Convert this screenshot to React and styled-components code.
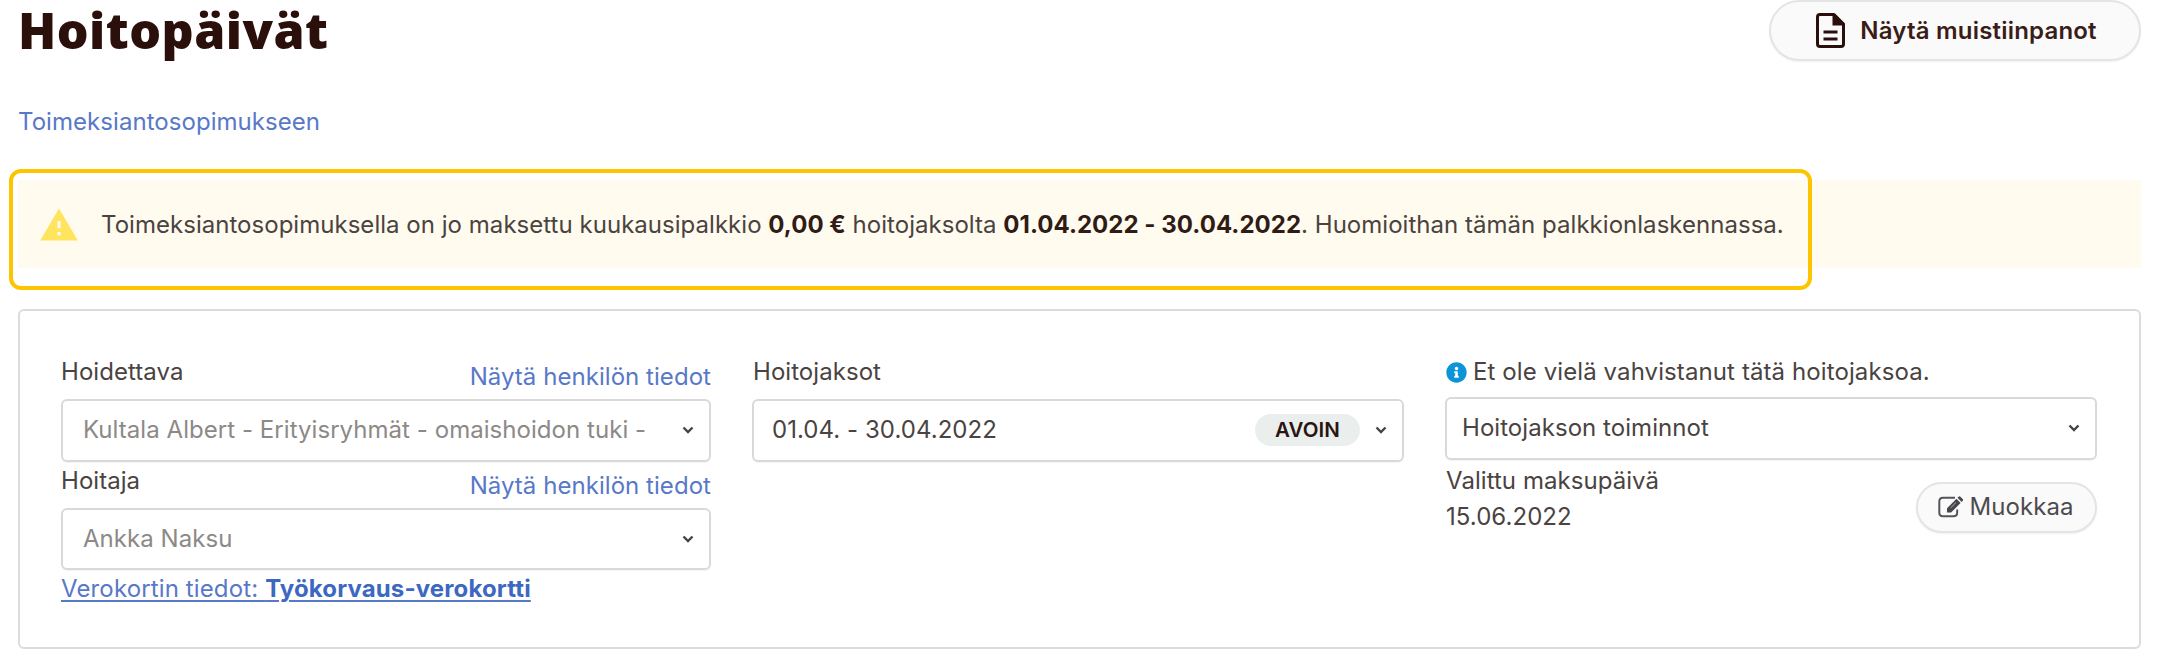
import React from 'react';
import styled, { createGlobalStyle } from 'styled-components';
import { FaInfoCircle } from 'react-icons/fa';

const GlobalStyle = createGlobalStyle`
  *, *::before, *::after { box-sizing: border-box; }
  body {
    margin: 0;
    background: #fff;
    color: #4a4341;
    font-family: Inter, "Liberation Sans", sans-serif;
    font-size: 24px;
    line-height: 36px;
    letter-spacing: 0.05px;
  }
`;

const Page = styled.main`
  display: flex;
  flex-direction: column;
  padding: 0 16px 0 18px;
  height: 666px;
`;

const Header = styled.header`
  display: flex;
  justify-content: space-between;
  align-items: flex-start;
  height: 104px;
`;

const Title = styled.h1`
  margin: 0;
  font-family: "Open Sans", sans-serif;
  font-size: 50px;
  font-weight: 800;
  line-height: 60px;
  letter-spacing: 0.45px;
  color: #2b0f0a;
`;

const PillButton = styled.button`
  display: flex;
  align-items: center;
  justify-content: center;
  gap: ${(p) => (p.$large ? '15px' : '6px')};
  width: ${(p) => (p.$large ? '372px' : '181px')};
  height: ${(p) => (p.$large ? '61px' : '51px')};
  padding: ${(p) => (p.$large ? '0 0 0 3px' : '0 2px 0 0')};
  border: 2px solid #e4e4e4;
  border-radius: 31px;
  background: #fafafa;
  box-shadow: 0 1px 2px rgba(0, 0, 0, 0.06);
  color: ${(p) => (p.$large ? '#3a1d19' : '#4d4b4e')};
  font: inherit;
  font-weight: ${(p) => (p.$large ? 600 : 400)};
  letter-spacing: ${(p) => (p.$large ? '0.2px' : 'inherit')};
`;

const Link = styled.a`
  color: #5878c8;
  text-decoration: ${(p) => (p.$underlined ? 'underline' : 'none')};
  text-decoration-thickness: 2px;
  text-underline-offset: 3px;
  letter-spacing: ${(p) => (p.$underlined ? '0.13px' : 'inherit')};
  padding-top: ${(p) => (p.$underlined ? '1px' : '0')};

  strong { color: #3d68c2; }
`;

const Alert = styled.section`
  position: relative;
  display: flex;
  align-items: center;
  gap: 23px;
  height: 88px;
  margin-top: 40px;
  padding-left: 22px;
  background: #fffbee;

  strong { color: #301b17; font-weight: 700; }
`;

const AlertText = styled.span`
  padding-top: 2px;
  letter-spacing: 0.03px;
`;

const Highlight = styled.div`
  position: absolute;
  top: -11px;
  left: -9px;
  width: 1803px;
  height: 121px;
  border: 4px solid #ffc400;
  border-radius: 12px;
  pointer-events: none;
`;

const Panel = styled.section`
  display: grid;
  grid-template-columns: 650px 652px 652px;
  column-gap: 41px;
  align-items: start;
  height: 340px;
  margin-top: 41px;
  padding: 42px 0 0 41px;
  border: 2px solid #dcdcdc;
  border-radius: 6px;
`;

const Column = styled.div`
  display: flex;
  flex-direction: column;
  min-width: 0;
`;

const LabelRow = styled.div`
  display: flex;
  justify-content: space-between;
  align-items: flex-start;
  height: ${(p) => p.$height || 46}px;
  padding: 1px 0 0 ${(p) => p.$indent || 0}px;

  ${Link} { margin-top: 5px; }
`;

const Notice = styled.span`
  display: flex;
  align-items: center;
  gap: 6px;
  padding-left: 1px;
  letter-spacing: 0.1px;

  svg { color: #0c94d8; }
`;

const SelectBox = styled.div`
  display: flex;
  align-items: center;
  height: 62.5px;
  padding: 0 15px 0 ${(p) => p.$inset || 20}px;
  border: 2px solid #d9d9d9;
  border-radius: 6px;
  box-shadow: 0 1px 1px rgba(0, 0, 0, 0.05);
  color: ${(p) => (p.$muted ? '#8c8987' : '#4a4341')};
`;

const Value = styled.span`
  flex: 1;
  white-space: nowrap;
`;

const Badge = styled.span`
  display: flex;
  align-items: center;
  justify-content: center;
  width: 105px;
  height: 32px;
  margin-right: 15px;
  border-radius: 16px;
  background: #eaeeed;
  color: #2b1512;
  font-size: 20.5px;
  font-weight: 600;
`;

const PaymentRow = styled.div`
  display: flex;
  justify-content: space-between;
  align-items: flex-start;
  padding: 3px 0 0 1px;

  ${PillButton} { margin-top: 19px; }
`;

const Chevron = () => (
  <svg width="12" height="10" viewBox="0 0 12 10" fill="none" stroke="#444" strokeWidth="2.4">
    <path d="M1.5 2.5 6 7l4.500-4.500" />
  </svg>
);

const WarningIcon = () => (
  <svg width="38" height="33" viewBox="0 0 38 33">
    <path d="M19 .5 37.800 32.500H.2Z" fill="#ffe45e" />
    <path d="M17.400 13h3.200v7.200h-3.200zM17.400 24h3.200v3.200h-3.200z" fill="#fffbee" />
  </svg>
);

const DocumentIcon = () => (
  <svg width="29" height="35" viewBox="0 0 29 35" fill="none" stroke="#2b0f0a" strokeWidth="3">
    <path d="M18 1.500H4Q1.500 1.500 1.500 4V31Q1.500 33.500 4 33.500H25Q27.500 33.500 27.500 31V11Z" strokeLinejoin="round" />
    <path d="M16.500 1V12.500H28.500V10.500L19 1Z" fill="#2b0f0a" stroke="none" />
    <path d="M7.500 19H21.500M7.500 26H21.500" />
  </svg>
);

const EditIcon = () => (
  <svg width="26" height="22" viewBox="0 0 26 22" fill="none">
    <path d="M17 1.700H5Q1.300 1.700 1.300 5.400V16.500Q1.300 20.200 5 20.200H15.500Q19.200 20.200 19.200 16.500V13.500" stroke="#56545a" strokeWidth="2" />
    <path d="M9 16.500V12.300L18.500 2.800 22.600 6.900 13.100 16.500ZM19.500 1.800 20.600.700Q21.500-.1 22.400.700L24.700 3Q25.500 3.900 24.700 4.800L23.600 5.900Z" fill="#48464b" />
    <path d="M12.700 11.800 18 6.500" stroke="#c9c8ca" strokeWidth=".8" />
  </svg>
);

const Select = ({ children, badge, muted, inset }) => (
  <SelectBox $muted={muted} $inset={inset}>
    <Value>{children}</Value>
    {badge && <Badge>{badge}</Badge>}
    <Chevron />
  </SelectBox>
);

const PersonField = ({ label, value }) => (
  <>
    <LabelRow>
      <span>{label}</span>
      <Link>Näytä henkilön tiedot</Link>
    </LabelRow>
    <Select muted>{value}</Select>
  </>
);

export default function App() {
  return (
    <>
      <GlobalStyle />
      <Page>
        <Header>
          <Title>Hoitopäivät</Title>
          <PillButton $large>
            <DocumentIcon />
            Näytä muistiinpanot
          </PillButton>
        </Header>
        <Link>Toimeksiantosopimukseen</Link>
        <Alert>
          <WarningIcon />
          <AlertText>
            Toimeksiantosopimuksella on jo maksettu kuukausipalkkio <strong>0,00 €</strong> hoitojaksolta{' '}
            <strong>01.04.2022 - 30.04.2022</strong>. Huomioithan tämän palkkionlaskennassa.
          </AlertText>
          <Highlight />
        </Alert>
        <Panel>
          <Column>
            <PersonField label="Hoidettava" value="Kultala Albert - Erityisryhmät - omaishoidon tuki -" />
            <PersonField label="Hoitaja" value="Ankka Naksu" />
            <Link $underlined>
              Verokortin tiedot: <strong>Työkorvaus-verokortti</strong>
            </Link>
          </Column>
          <Column>
            <LabelRow $indent={1}>
              <span>Hoitojaksot</span>
            </LabelRow>
            <Select badge="AVOIN" inset={18}>01.04. - 30.04.2022</Select>
          </Column>
          <Column>
            <LabelRow $height={44}>
              <Notice>
                <FaInfoCircle size={21} />
                Et ole vielä vahvistanut tätä hoitojaksoa.
              </Notice>
            </LabelRow>
            <Select inset={15}>Hoitojakson toiminnot</Select>
            <PaymentRow>
              <div>
                <div>Valittu maksupäivä</div>
                <div>15.06.2022</div>
              </div>
              <PillButton>
                <EditIcon />
                Muokkaa
              </PillButton>
            </PaymentRow>
          </Column>
        </Panel>
      </Page>
    </>
  );
}
